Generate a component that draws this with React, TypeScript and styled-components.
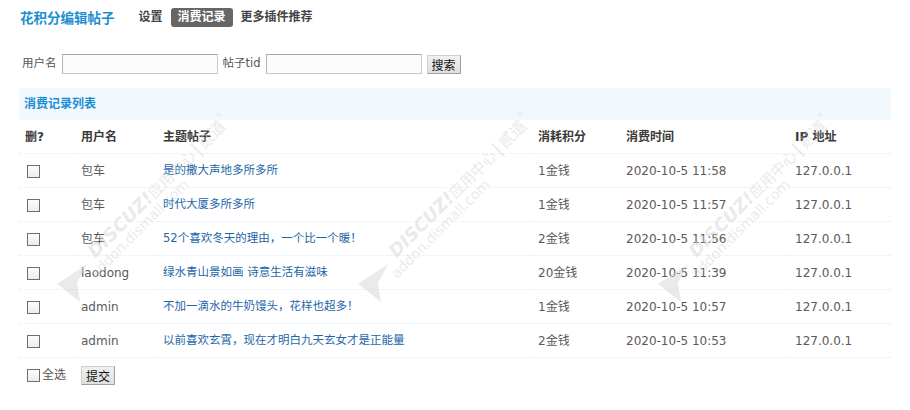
import React from 'react';
import styled, { createGlobalStyle } from 'styled-components';

/**
 * Consumption record row
 */
interface IRecord {
  id: number;
  user: string;
  subject: string;
  cost: string;
  time: string;
  ip: string;
}

const records: IRecord[] = [
  { id: 1, user: '包车', subject: '是的撒大声地多所多所', cost: '1金钱', time: '2020-10-5 11:58', ip: '127.0.0.1' },
  { id: 2, user: '包车', subject: '时代大厦多所多所', cost: '1金钱', time: '2020-10-5 11:57', ip: '127.0.0.1' },
  { id: 3, user: '包车', subject: '52个喜欢冬天的理由，一个比一个暖！', cost: '2金钱', time: '2020-10-5 11:56', ip: '127.0.0.1' },
  { id: 4, user: 'laodong', subject: '绿水青山景如画 诗意生活有滋味', cost: '20金钱', time: '2020-10-5 11:39', ip: '127.0.0.1' },
  { id: 5, user: 'admin', subject: '不加一滴水的牛奶馒头，花样也超多！', cost: '1金钱', time: '2020-10-5 10:57', ip: '127.0.0.1' },
  { id: 6, user: 'admin', subject: '以前喜欢玄霄，现在才明白九天玄女才是正能量', cost: '2金钱', time: '2020-10-5 10:53', ip: '127.0.0.1' },
];

const colWidths = [56, 82, 375, 88, 169];
const watermarks = [57, 358, 658];

const GlobalStyle = createGlobalStyle`
  body {
    margin: 0;
    background: #fff;
    color: #555;
    font: 12px/1.5 "DejaVu Sans", "Noto Sans CJK SC", sans-serif;
  }
`;

function App() {
  return (
    <>
      <GlobalStyle />
      <Page>
        <TopBar>
          <Title>花积分编辑帖子</Title>
          <Nav>
            <NavItem>设置</NavItem>
            <NavItem $active>消费记录</NavItem>
            <NavItem>更多插件推荐</NavItem>
          </Nav>
        </TopBar>

        <SearchForm>
          <Label>用户名</Label>
          <TextInput type="text" />
          <Label>帖子tid</Label>
          <TextInput type="text" />
          <Button type="button">搜索</Button>
        </SearchForm>

        <Partition>消费记录列表</Partition>

        <Table>
          <colgroup>
            {colWidths.map((w, i) => <col key={i} style={{ width: w }} />)}
            <col />
          </colgroup>
          <thead>
            <tr>
              <Th>删?</Th>
              <Th>用户名</Th>
              <Th>主题帖子</Th>
              <Th>消耗积分</Th>
              <Th>消费时间</Th>
              <Th>IP 地址</Th>
            </tr>
          </thead>
          <tbody>
            {records.map((r) => (
              <tr key={r.id}>
                <Td><Check type="checkbox" /></Td>
                <Td>{r.user}</Td>
                <Td><SubjectLink href="#">{r.subject}</SubjectLink></Td>
                <Td>{r.cost}</Td>
                <Td>{r.time}</Td>
                <Td>{r.ip}</Td>
              </tr>
            ))}
          </tbody>
          <tfoot>
            <tr>
              <FootCell colSpan={6}>
                <Footer>
                  <CheckLabel>
                    <Check type="checkbox" />
                    全选
                  </CheckLabel>
                  <Button type="button">提交</Button>
                </Footer>
              </FootCell>
            </tr>
          </tfoot>
        </Table>

        {watermarks.map((x) => (
          <Watermark key={x} $left={x - 10} width="230" height="210" viewBox="0 0 230 210">
            <polygon points="10,186 40,166 30,185 33,204" />
            <g transform="translate(10,186) rotate(-45)">
              <text x="45" y="9">
                <tspan fontSize="18" fontWeight="bold" fontStyle="italic">DISCUZ!</tspan>
                <tspan fontSize="15" fontFamily="Noto Sans CJK SC, sans-serif">应用中心</tspan>
                <tspan fontSize="18" dx="2">|</tspan>
                <tspan fontSize="16" dx="2" fontFamily="Noto Sans CJK SC, sans-serif">贰道</tspan>
                <tspan fontSize="7" dy="-12">®</tspan>
              </text>
              <text x="31" y="24" fontSize="14">addon.dismall.com</text>
            </g>
          </Watermark>
        ))}
      </Page>
    </>
  );
}

/**
 * Styled components
 */
const Page = styled.div`
  position: relative;
  padding: 0 19px;
  min-height: 410px;
`;

const TopBar = styled.div`
  display: flex;
  align-items: center;
  height: 35px;
  padding-left: 1px;
`;

const Title = styled.h3`
  margin: 0 17px 0 0;
  font-family: "Noto Sans CJK SC", sans-serif;
  font-size: 13.5px;
  font-weight: bold;
  color: #1b8ed3;
`;

const Nav = styled.div`
  display: flex;
  gap: 1px;
`;

const NavItem = styled.span<{ $active?: boolean }>`
  padding: 0 7px;
  height: 19px;
  line-height: 19px;
  border-radius: 3px;
  font-weight: bold;
  font-size: 12px;
  color: ${(p) => (p.$active ? '#fff' : '#444')};
  background: ${(p) => (p.$active ? '#666' : 'transparent')};
`;

const SearchForm = styled.form`
  display: flex;
  align-items: center;
  gap: 5px;
  margin-top: 19px;
  padding-left: 3px;
`;

const Label = styled.span`
  font-size: 11.5px;
  color: #555;
`;

const TextInput = styled.input`
  box-sizing: border-box;
  width: 156px;
  height: 20px;
  margin: 0;
  padding: 0 3px;
  border: 1px solid #c8c8c8;
  border-top-color: #a8a8a8;
  border-left-color: #b4b4b4;
  background: #fcfcfc;
  outline: none;
`;

const Button = styled.button`
  box-sizing: border-box;
  height: 19px;
  margin: 0;
  padding: 0 4px;
  font: 12px/17px "Noto Sans CJK SC", sans-serif;
  color: #111;
  background: linear-gradient(#f0f0f0, #e0e0e0);
  border: 1px solid;
  border-color: #d0d0d0 #a0a0a0 #a0a0a0 #d0d0d0;
  border-radius: 0;
`;

const Partition = styled.div`
  margin-top: 14px;
  height: 32px;
  line-height: 32px;
  padding-left: 5px;
  background: #f2f9fd;
  color: #1b8ed3;
  font-weight: bold;
`;

const Table = styled.table`
  width: 100%;
  table-layout: fixed;
  border-collapse: collapse;
`;

const Th = styled.th`
  height: 33px;
  padding: 0 6px;
  text-align: left;
  font-weight: bold;
  color: #3a3a3a;
  border-bottom: 1px dotted #deeffb;
`;

const Td = styled.td`
  height: 33px;
  padding: 0 6px;
  color: #5a5a5a;
  white-space: nowrap;
  border-bottom: 1px dotted #deeffb;
`;

const FootCell = styled.td`
  height: 34px;
  padding: 0 6px;
`;

const Footer = styled.div`
  display: flex;
  align-items: center;
  gap: 15px;
`;

const CheckLabel = styled.label`
  display: flex;
  align-items: center;
  gap: 2px;
  color: #555;
`;

const Check = styled.input`
  appearance: none;
  box-sizing: border-box;
  width: 13px;
  height: 13px;
  margin: 0 0 0 2px;
  vertical-align: middle;
  border: 1px solid #6f6f6f;
  background: linear-gradient(#fdfdfd, #ececec);
`;

const SubjectLink = styled.a`
  font-size: 11.5px;
  color: #2366a8;
  text-decoration: none;
`;

const Watermark = styled.svg<{ $left: number }>`
  position: absolute;
  top: 98px;
  left: ${(p) => p.$left}px;
  pointer-events: none;
  overflow: visible;
  fill: #d2d2d2;
  opacity: 0.45;
  font-family: "DejaVu Sans", sans-serif;
`;

export default App;
